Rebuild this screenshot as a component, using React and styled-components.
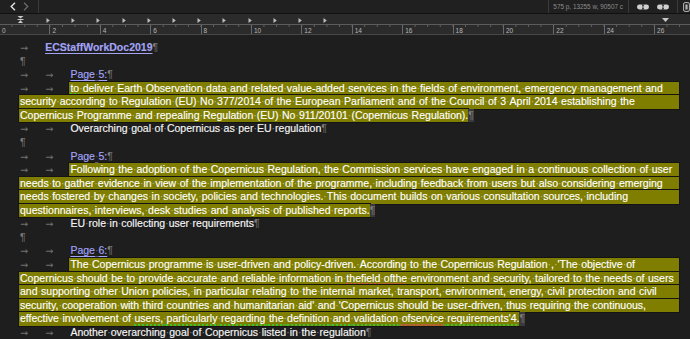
import React from 'react';
import styled, { createGlobalStyle } from 'styled-components';

const LH = 13.57;
const TAB = 25.2;
const UNIT = 50.4;

const GlobalStyle = createGlobalStyle`
  html, body { margin: 0; padding: 0; background: #1e1e1e; overflow: hidden; }
  body { font-family: "Liberation Sans", Arial, Helvetica, sans-serif; }
`;

const Window = styled.div`
  width: 690px;
  height: 339px;
  display: flex;
  flex-direction: column;
  background: #1e1e1e;
  overflow: hidden;
`;

/* ---------- toolbar ---------- */
const Toolbar = styled.div`
  flex: none;
  height: 13px;
  display: flex;
  align-items: stretch;
  background: #202020;
  border-bottom: 1px solid #101010;
`;
const NavGroup = styled.div`
  width: 39px;
  box-sizing: border-box;
  display: flex;
  align-items: center;
  gap: 7px;
  padding-left: 10px;
  border-right: 1px solid #3a3a3a;
`;
const NavButton = styled.span`
  display: flex;
  color: ${p => (p.$dim ? '#6c6c6c' : '#e2e2e2')};
`;
const Spacer = styled.div`
  flex: 1;
`;
const Segment = styled.div`
  display: flex;
  align-items: center;
  gap: ${p => p.$gap || 0}px;
  padding: 0 ${p => p.$right || 0}px 0 ${p => p.$left || 0}px;
  border-left: 1px solid #3a3a3a;
`;
const Stats = styled.span`
  font-size: 6.4px;
  color: #8d8d8d;
  white-space: nowrap;
`;

/* ---------- ruler ---------- */
const Ruler = styled.div`
  flex: none;
  height: 20px;
  background: #2b2b2b;
  border-bottom: 1px solid #474747;
  display: flex;
  flex-direction: column;
  overflow: hidden;
`;
const RulerMarks = styled.div`
  height: 10px;
  display: flex;
  align-items: flex-end;
  padding: 0 21px 1px 17px;
`;
const TabStopRow = styled.div`
  display: flex;
  margin-left: 22px;
`;
const TabStopCell = styled.div`
  flex: none;
  width: ${TAB}px;
  display: flex;
`;
const RulerLine = styled.div`
  height: 1px;
  background: #5c5c5c;
`;
const RulerScale = styled.div`
  height: 9px;
  display: flex;
  margin-left: -1px;
  background-image: linear-gradient(to right, #5f5f5f 1px, transparent 1px);
  background-size: ${UNIT / 4}px 2px;
  background-repeat: repeat-x;
  background-position: 0 0;
`;
const RulerCell = styled.div`
  flex: none;
  width: ${UNIT}px;
  box-sizing: border-box;
  border-left: 1px solid #6a6a6a;
  padding: 2px 0 0 2px;
  font-size: 6.5px;
  line-height: 7px;
  color: #b8b8b8;
`;

/* ---------- document ---------- */
const Page = styled.div`
  flex: 1;
  padding: 6px 11px 0 20px;
  font-size: 10.52px;
  line-height: ${LH}px;
  color: #f6f6f6;
  -webkit-text-stroke: 0.15px currentColor;
`;
const Line = styled.div`
  display: flex;
  height: ${LH}px;
  white-space: pre;
`;
const Tab = styled.span`
  flex: none;
  width: ${TAB}px;
  color: #707070;
  font-family: "DejaVu Sans", sans-serif;
  font-size: 9.5px;
  box-sizing: border-box;
  -webkit-text-stroke: 0;
`;
const Text = styled.span`
  flex: none;
`;
const Link = styled.span`
  flex: none;
  color: #a4a4f6;
  text-decoration: underline;
  text-underline-offset: 1.5px;
  font-weight: ${p => (p.$bold ? 700 : 400)};
`;
const Pilcrow = styled.span`
  flex: none;
  color: #7c7c7c;
  background: ${p => (p.$boxed ? '#3a3a3a' : 'transparent')};
  -webkit-text-stroke: 0;
`;
const Mark = styled.span`
  flex: ${p => (p.$full ? 1 : 'none')};
  background: #7f7e00;
  box-shadow: 0 0 0 1px #141414;
  margin-left: -1px;
  padding-left: 1px;
  color: #ffffff;
`;
const Dot = styled.span`
  opacity: 0.45;
  -webkit-text-stroke: 0;
`;
const Squiggle = styled.span`
  text-decoration: underline dotted ${p => p.$c};
  text-decoration-thickness: 1.5px;
  text-underline-offset: 2px;
`;

const GREEN = '#35c435';
const RED = '#e0485a';

function S({ children }) {
  const parts = String(children).split(' ');
  return parts.flatMap((w, i) => (i ? [<Dot key={'d' + i}>·</Dot>, w] : [w]));
}

const ChevronLeft = () => (
  <svg width="6" height="9" viewBox="0 0 6 9">
    <polyline points="5,0.8 1.2,4.5 5,8.2" fill="none" stroke="currentColor" strokeWidth="1.4" />
  </svg>
);
const ChevronRight = () => (
  <svg width="6" height="9" viewBox="0 0 6 9">
    <polyline points="1,0.8 4.8,4.5 1,8.2" fill="none" stroke="currentColor" strokeWidth="1.2" />
  </svg>
);
const PairIcon = () => (
  <svg width="12" height="6" viewBox="0 0 12 6">
    <rect x="0" y="0.5" width="12" height="5" rx="2.4" fill="#cfcfcf" />
    <polygon points="4.5,0.5 7.5,0.5 6,2.2" fill="#202020" />
    <polygon points="4.5,5.5 7.5,5.5 6,3.8" fill="#202020" />
    <rect x="5.6" y="1" width="0.8" height="4" fill="#202020" />
  </svg>
);
const PanelIcon = () => (
  <svg width="7" height="10" viewBox="0 0 7 10">
    <rect x="0.6" y="0.6" width="5.8" height="8.8" rx="1.4" fill="none" stroke="#b5b5b5" strokeWidth="1" />
    <rect x="2.4" y="2.5" width="2.2" height="5" fill="#b5b5b5" />
  </svg>
);
const IndentMarker = () => (
  <svg width="7" height="7" viewBox="0 0 7 7">
    <polygon points="0.5,0 6.5,0 3.5,2.5" fill="#c8c8c8" />
    <rect x="0.5" y="3" width="6" height="1" fill="#c8c8c8" />
    <polygon points="3.5,4 6,7 1,7" fill="#c8c8c8" />
  </svg>
);
const TabStop = () => (
  <svg width="4" height="5" viewBox="0 0 4 5">
    <polygon points="0.5,0 3.8,2.5 0.5,5" fill="#bdbdbd" />
  </svg>
);
const RightIndent = () => (
  <svg width="7" height="4" viewBox="0 0 7 4" style={{ marginBottom: 1 }}>
    <polygon points="0,0 7,0 3.5,4" fill="#c8c8c8" />
  </svg>
);

const Tabs = ({ n = 2 }) =>
  Array.from({ length: n }, (_, i) => <Tab key={i}>→</Tab>);

export default function App() {
  const numbers = Array.from({ length: 14 }, (_, i) => i * 2);
  return (
    <Window>
      <GlobalStyle />
      <Toolbar>
        <NavGroup>
          <NavButton><ChevronLeft /></NavButton>
          <NavButton $dim><ChevronRight /></NavButton>
        </NavGroup>
        <Spacer />
        <Segment $left={4} $right={5}>
          <Stats>575 p, 13255 w, 90507 c</Stats>
        </Segment>
        <Segment $left={8} $right={8} $gap={8}>
          <PairIcon />
          <PairIcon />
        </Segment>
        <Segment $left={5} $right={0}>
          <PanelIcon />
        </Segment>
      </Toolbar>

      <Ruler>
        <RulerMarks>
          <IndentMarker />
          <TabStopRow>
            {Array.from({ length: 12 }, (_, i) => (
              <TabStopCell key={i}><TabStop /></TabStopCell>
            ))}
          </TabStopRow>
          <Spacer />
          <RightIndent />
        </RulerMarks>
        <RulerLine />
        <RulerScale>
          {numbers.map(n => (
            <RulerCell key={n}>{n}</RulerCell>
          ))}
        </RulerScale>
      </Ruler>

      <Page>
        <Line><Tabs n={1} /><Link $bold>ECStaffWorkDoc2019</Link><Pilcrow>¶</Pilcrow></Line>
        <Line><Pilcrow>¶</Pilcrow></Line>
        <Line><Tabs /><Link><S>Page 5:</S></Link><Pilcrow>¶</Pilcrow></Line>

        <Line><Tabs /><Mark $full><Squiggle $c={GREEN}>to</Squiggle><S>{' deliver Earth Observation data and related value-added services in the fields of environment, emergency management and'}</S></Mark></Line>
        <Line><Mark $full><S>security according to Regulation (EU) No 377/2014 of the European Parliament and of the Council of 3 April 2014 establishing the</S></Mark></Line>
        <Line><Mark><S>Copernicus Programme and repealing Regulation (EU) No 911/20101 (Copernicus Regulation).</S></Mark><Pilcrow $boxed>¶</Pilcrow></Line>

        <Line><Tabs /><Text><S>Overarching goal of Copernicus as per EU regulation</S></Text><Pilcrow>¶</Pilcrow></Line>
        <Line><Pilcrow>¶</Pilcrow></Line>
        <Line><Tabs /><Link><S>Page 5:</S></Link><Pilcrow>¶</Pilcrow></Line>

        <Line><Tabs /><Mark $full><S>Following the adoption of the Copernicus Regulation, the Commission services have engaged in a continuous collection of user</S></Mark></Line>
        <Line><Mark $full><S>needs to gather evidence in view of the implementation of the programme, including feedback from users but also considering emerging</S></Mark></Line>
        <Line><Mark $full><S>needs fostered by changes in society, policies and technologies. This document builds on various consultation sources, including</S></Mark></Line>
        <Line><Mark><S>questionnaires, interviews, desk studies and analysis of published reports.</S></Mark><Pilcrow $boxed>¶</Pilcrow></Line>

        <Line><Tabs /><Text><S>EU role in collecting user requirements</S></Text><Pilcrow>¶</Pilcrow></Line>
        <Line><Pilcrow>¶</Pilcrow></Line>
        <Line><Tabs /><Link><S>Page 6:</S></Link><Pilcrow>¶</Pilcrow></Line>

        <Line><Tabs /><Mark $full><S>The Copernicus programme is user-driven and policy-driven. According to the Copernicus Regulation , 'The objective of</S></Mark></Line>
        <Line><Mark $full><S>Copernicus should be to provide accurate and reliable information in </S><Squiggle $c={RED}>thefield</Squiggle><S>{' '}</S><Squiggle $c={RED}>ofthe</Squiggle><S>{' environment and security, tailored to the needs of users'}</S></Mark></Line>
        <Line><Mark $full><S>and supporting other Union policies, in particular relating to the internal market, transport, environment, energy, civil protection and civil</S></Mark></Line>
        <Line><Mark $full><S>security, cooperation with third countries and humanitarian aid' and 'Copernicus should be user-driven, thus requiring the continuous,</S></Mark></Line>
        <Line><Mark><S>effective involvement of </S><Squiggle $c={GREEN}><S>users, particularly regarding the definition and validation </S></Squiggle><Squiggle $c={RED}>ofservice</Squiggle><Squiggle $c={GREEN}><S>{" requirements'4."}</S></Squiggle></Mark><Pilcrow $boxed>¶</Pilcrow></Line>

        <Line><Tabs /><Text><S>Another overarching goal of Copernicus listed in the regulation</S></Text><Pilcrow>¶</Pilcrow></Line>
      </Page>
    </Window>
  );
}
